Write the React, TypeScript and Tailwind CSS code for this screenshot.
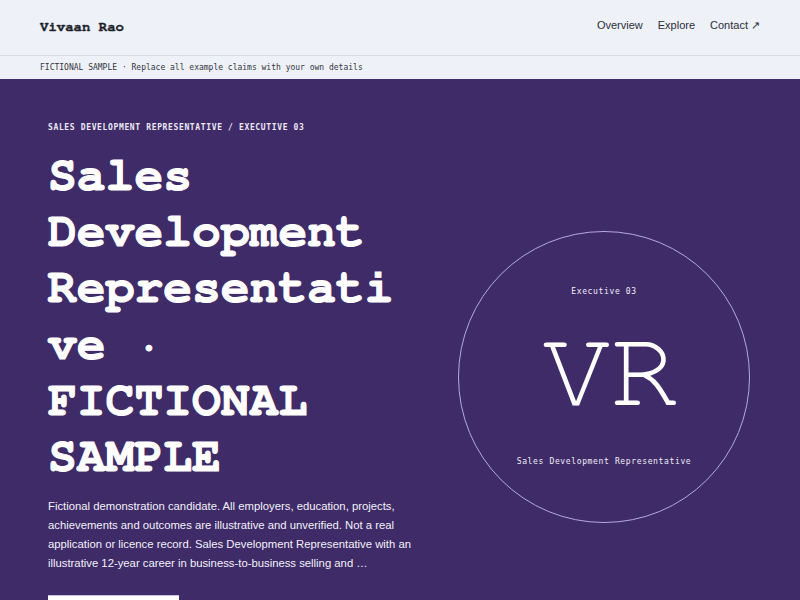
import React from "react";

export default function App() {
  return (
    <div className="min-h-screen bg-[#3e2b67] font-['Liberation_Sans',Arial,sans-serif]">
      <header className="h-[56px] bg-[#eef1f8] border-b border-[#d9dce4] px-10 flex items-center justify-between">
        <div className="font-['FreeMono','Courier','Liberation_Mono',monospace] font-bold text-[14px] text-[#1c1f2a] [-webkit-text-stroke:0.4px_#1c1f2a]">
          Vivaan Rao
        </div>
        <nav className="flex items-center gap-[15px] text-[11px] text-[#2b2e38] -mt-[4px]">
          <a>Overview</a>
          <a>Explore</a>
          <a>Contact ↗</a>
        </nav>
      </header>
      <div className="h-[23px] bg-[#eef1f8] px-10 flex items-center font-['DejaVu_Sans_Mono',monospace] text-[8px] text-[#33363f]">
        FICTIONAL SAMPLE · Replace all example claims with your own details
      </div>
      <section className="bg-[#3e2b67] px-12 pt-[43px] text-white">
        <div className="grid grid-cols-[372px_1fr] items-center">
          <div>
            <div className="font-['DejaVu_Sans_Mono',monospace] font-bold text-[8px] tracking-[0.08em] leading-[12px] text-[#ece8f6]">
              SALES DEVELOPMENT REPRESENTATIVE / EXECUTIVE 03
            </div>
            <h1 className="mt-[14px] font-['FreeMono','Courier','Liberation_Mono',monospace] font-bold text-[48px] leading-[56.2px] [overflow-wrap:anywhere] text-white [-webkit-text-stroke:1px_white]">
              Sales Development Representative · FICTIONAL SAMPLE
            </h1>
            <p className="mt-[12px] text-[11.3px] leading-[19px] text-[#f3f1f9]">
              Fictional demonstration candidate. All employers, education, projects, achievements and outcomes are illustrative and unverified. Not a real application or licence record. Sales Development Representative with an illustrative 12-year career in business-to-business selling and …
            </p>
            <div className="mt-[22px]">
              <button className="h-[48px] w-[131px] bg-white border-t border-[#c9bdf0] text-[#3e2b67] text-[11px] font-bold">
                View experience
              </button>
            </div>
          </div>
          <div className="flex justify-end pr-[2px] -mt-[12px]">
            <div className="w-[292px] h-[292px] rounded-full border border-[#b7a8e0] flex flex-col items-center justify-center">
              <div className="font-['DejaVu_Sans_Mono',monospace] text-[8px] tracking-[0.08em] text-[#f0edf8]">
                Executive 03
              </div>
              <div className="mt-[17px] ml-[12px] font-['FreeMono','Courier',serif] text-[112px] leading-none text-white">
                VR
              </div>
              <div className="mt-[29px] font-['DejaVu_Sans_Mono',monospace] text-[8px] tracking-[0.08em] text-[#f0edf8]">
                Sales Development Representative
              </div>
            </div>
          </div>
        </div>
      </section>
    </div>
  );
}
